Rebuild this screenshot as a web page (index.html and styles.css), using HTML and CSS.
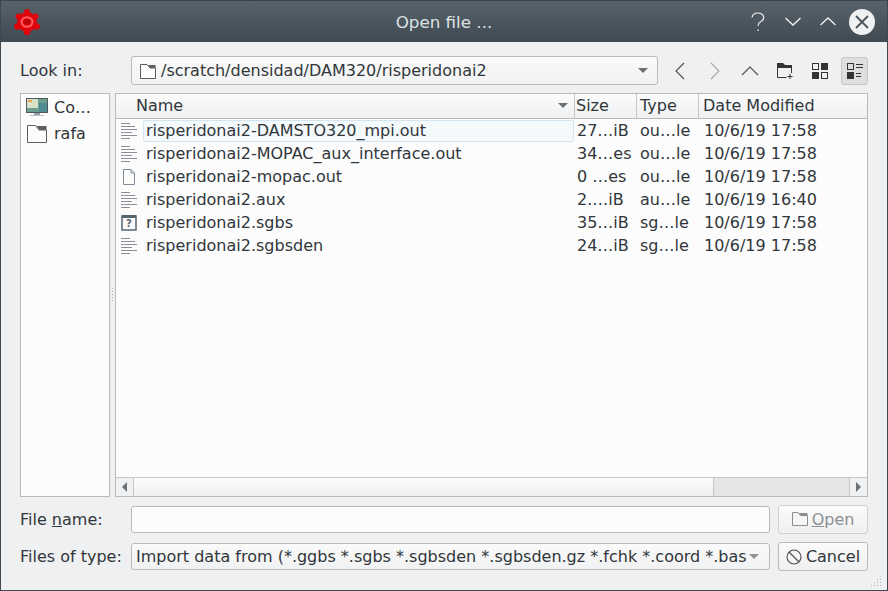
FILE: index.html
```html
<!DOCTYPE html>
<html lang="en">
<head>
<meta charset="utf-8">
<title>Open file ...</title>
<link rel="stylesheet" href="styles.css">
</head>
<body>
<div class="window">
  <header class="titlebar">
    <svg class="app-icon" width="28" height="28" viewBox="0 0 28 28">
      <g fill="#dd050b">
        <circle cx="14" cy="14" r="10"/>
        <circle cx="14" cy="4" r="3"/><circle cx="22.500" cy="8.500" r="3"/><circle cx="23.500" cy="18.500" r="3.300"/>
        <circle cx="14" cy="24" r="3.300"/><circle cx="4.500" cy="18.500" r="3.300"/><circle cx="5.500" cy="8.500" r="3"/>
      </g>
      <ellipse cx="14" cy="14" rx="5.500" ry="4.800" fill="none" stroke="#ff5a60" stroke-width="2"/>
      <ellipse cx="14" cy="14" rx="3" ry="2.400" fill="#bb040a"/>
    </svg>
    <div class="title">Open file ...</div>
    <div class="win-buttons">
      <svg class="win-help" width="14" height="20" viewBox="0 0 14 20"><path d="M1 5.500C1.500 2.500 4 1 7 1c3 0 5.800 1.700 5.800 4.500 0 2.200-1.500 3.300-3.200 4.200C7.800 10.700 7 11.500 7 14" fill="none" stroke="#eff0f1" stroke-width="1.200"/><rect x="6.400" y="17.400" width="1.300" height="1.600" fill="#eff0f1"/></svg>
      <svg class="win-chev win-down" width="16" height="9" viewBox="0 0 16 9"><path d="M.5 1l7.500 7 7.500-7" fill="none" stroke="#eff0f1" stroke-width="1.400"/></svg>
      <svg class="win-chev win-up" width="16" height="9" viewBox="0 0 16 9"><path d="M.5 8L8 1l7.500 7" fill="none" stroke="#eff0f1" stroke-width="1.400"/></svg>
      <div class="win-close"><svg width="26" height="26" viewBox="0 0 26 26"><path d="M7 7l12 12M19 7L7 19" stroke="#47525b" stroke-width="1.800"/></svg></div>
    </div>
  </header>

  <main class="content">
    <div class="row look-row">
      <label class="label">Look in:</label>
      <div class="combo look-combo">
        <svg class="combo-folder" width="16" height="16" viewBox="0 0 16 16"><path d="M.5 15.500V1.500H7L10 5h5.500v10.500z" fill="#fcfcfc" stroke="#5a5f63"/><path d="M8 2h7.500v3h-5z" fill="#5a5f63"/></svg>
        <span class="combo-text">/scratch/densidad/DAM320/risperidonai2</span>
        <span class="arrow"></span>
      </div>
      <div class="toolbar">
        <button class="tool"><svg width="12" height="18" viewBox="0 0 12 18"><path d="M10 1L2 9l8 8" fill="none" stroke="#4d4d4d" stroke-width="1.100"/></svg></button>
        <button class="tool"><svg width="12" height="18" viewBox="0 0 12 18"><path d="M2 1l8 8-8 8" fill="none" stroke="#a5a7a9" stroke-width="1.100"/></svg></button>
        <button class="tool"><svg width="18" height="12" viewBox="0 0 18 12"><path d="M1 10l8-8 8 8" fill="none" stroke="#4d4d4d" stroke-width="1.100"/></svg></button>
        <button class="tool"><svg width="18" height="18" viewBox="0 0 18 18"><path d="M1.500 15.500V4" fill="none" stroke="#333"/><path d="M1 1h6l2 2h7v3H1z" fill="#333"/><path d="M1.500 15.500h9M15.500 6v5" fill="none" stroke="#333"/><path d="M14 12v5M11.500 14.500h5" stroke="#333"/></svg></button>
        <button class="tool"><svg width="16" height="16" viewBox="0 0 16 16"><rect x=".5" y=".5" width="6" height="6" fill="none" stroke="#333"/><rect x="9" y="0" width="7" height="7" fill="#333"/><rect x="0" y="9" width="7" height="7" fill="#333"/><rect x="9.500" y="9.500" width="6" height="6" fill="none" stroke="#333"/></svg></button>
        <button class="tool tool-on"><svg width="16" height="16" viewBox="0 0 16 16"><rect x=".5" y=".5" width="6" height="6" fill="none" stroke="#333"/><path d="M9 1.500h7M9 4.500h7M9 10.500h5M9 13.500h5" stroke="#333"/><rect x="0" y="9" width="7" height="7" fill="#333"/></svg></button>
      </div>
    </div>

    <div class="panes">
      <aside class="sidebar">
        <div class="place">
          <svg width="22" height="20" viewBox="0 0 22 20"><rect x="0" y="0" width="22" height="15" fill="#4e5a60"/><rect x="1" y="1" width="20" height="13" fill="#6ba08f"/><rect x="1" y="1" width="11" height="9" fill="#d8e2c8"/><rect x="2" y="2" width="4" height="2" fill="#e9a14b"/><rect x="13" y="5" width="8" height="9" fill="#4f8c94"/><rect x="8" y="15" width="6" height="2" fill="#9aa2a6"/><rect x="4" y="17" width="14" height="1" fill="#b9bfc3"/></svg>
          <span>Co…</span>
        </div>
        <div class="place">
          <svg width="22" height="20" viewBox="0 0 22 20"><path d="M1.500 18.500V1.500H9.500L13 6h7.500v12.500z" fill="#fcfcfc" stroke="#5a5f63"/><path d="M10.500 2h10v4h-7z" fill="#5a5f63"/></svg>
          <span>rafa</span>
        </div>
      </aside>
      <div class="splitter"></div>
      <section class="tree">
        <div class="thead">
          <div class="th th-name">Name<span class="sort"></span></div>
          <div class="th th-size">Size</div>
          <div class="th th-type">Type</div>
          <div class="th th-date">Date Modified</div>
        </div>
        <div class="tbody">
          <div class="tr current">
            <div class="td td-name"><svg class="doc" width="16" height="16" viewBox="0 0 16 16"><path d="M0 .5h9M0 3.500h14M0 6.500h16M0 9.500h11M0 12.500h16M0 15.500h9" stroke="#8a9096"/></svg><span class="fname">risperidonai2-DAMSTO320_mpi.out</span></div>
            <div class="td td-size">27…iB</div><div class="td td-type">ou…le</div><div class="td td-date">10/6/19 17:58</div>
          </div>
          <div class="tr">
            <div class="td td-name"><svg class="doc" width="16" height="16" viewBox="0 0 16 16"><path d="M0 .5h9M0 3.500h14M0 6.500h16M0 9.500h11M0 12.500h16M0 15.500h9" stroke="#8a9096"/></svg><span class="fname">risperidonai2-MOPAC_aux_interface.out</span></div>
            <div class="td td-size">34…es</div><div class="td td-type">ou…le</div><div class="td td-date">10/6/19 17:58</div>
          </div>
          <div class="tr">
            <div class="td td-name"><svg class="doc" width="16" height="16" viewBox="0 0 16 16"><path d="M2.500.5H10l3.500 3.500v11.500h-11z M10 .5V4h3.500" fill="#fcfcfc" stroke="#7f8c98"/></svg><span class="fname">risperidonai2-mopac.out</span></div>
            <div class="td td-size">0 …es</div><div class="td td-type">ou…le</div><div class="td td-date">10/6/19 17:58</div>
          </div>
          <div class="tr">
            <div class="td td-name"><svg class="doc" width="16" height="16" viewBox="0 0 16 16"><path d="M0 .5h9M0 3.500h14M0 6.500h16M0 9.500h11M0 12.500h16M0 15.500h9" stroke="#8a9096"/></svg><span class="fname">risperidonai2.aux</span></div>
            <div class="td td-size">2.…iB</div><div class="td td-type">au…le</div><div class="td td-date">10/6/19 16:40</div>
          </div>
          <div class="tr">
            <div class="td td-name"><svg class="doc" width="16" height="16" viewBox="0 0 16 16"><rect x="1" y="1" width="14" height="14" fill="#fcfcfc" stroke="#56646f" stroke-width="1.500"/><rect x="1" y="0" width="14" height="3" fill="#56646f"/></svg><span class="qmark">?</span><span class="fname">risperidonai2.sgbs</span></div>
            <div class="td td-size">35…iB</div><div class="td td-type">sg…le</div><div class="td td-date">10/6/19 17:58</div>
          </div>
          <div class="tr">
            <div class="td td-name"><svg class="doc" width="16" height="16" viewBox="0 0 16 16"><path d="M0 .5h9M0 3.500h14M0 6.500h16M0 9.500h11M0 12.500h16M0 15.500h9" stroke="#8a9096"/></svg><span class="fname">risperidonai2.sgbsden</span></div>
            <div class="td td-size">24…iB</div><div class="td td-type">sg…le</div><div class="td td-date">10/6/19 17:58</div>
          </div>
        </div>
        <div class="hscroll">
          <div class="sb-btn"><span class="tri-left"></span></div>
          <div class="sb-thumb"></div>
          <div class="sb-track"></div>
          <div class="sb-btn sb-btn-r"><span class="tri-right"></span></div>
        </div>
      </section>
    </div>

    <div class="row name-row">
      <label class="label">File <u>n</u>ame:</label>
      <div class="input"></div>
      <button class="btn btn-off">
        <svg width="16" height="16" viewBox="0 0 16 16"><path d="M.5 14.500V1.500H6l2.500 3h7v10z" fill="#f5f5f5" stroke="#8b8d8f"/><path d="M6.500 2h9v2.500H9z" fill="#8b8d8f"/></svg>
        <span><u>O</u>pen</span>
      </button>
    </div>
    <div class="row type-row">
      <label class="label">Files of type:</label>
      <div class="combo type-combo">
        <span class="combo-clip">Import data from (*.ggbs *.sgbs *.sgbsden *.sgbsden.gz *.fchk *.coord *.bas</span>
        <span class="arrow"></span>
      </div>
      <button class="btn">
        <svg width="16" height="16" viewBox="0 0 16 16"><circle cx="8" cy="8" r="7" fill="none" stroke="#4d4d4d" stroke-width="1.100"/><path d="M3 3l10 10" stroke="#4d4d4d" stroke-width="1.100"/></svg>
        <span>Cancel</span>
      </button>
    </div>
  </main>
  <svg class="grip" width="12" height="12" viewBox="0 0 12 12"><path d="M9 1h1v1H9zM6 4h1v1H6zM9 4h1v1H9zM3 7h1v1H3zM6 7h1v1H6zM9 7h1v1H9zM0 10h1v1H0zM3 10h1v1H3zM6 10h1v1H6zM9 10h1v1H9z" fill="#b4b6b8"/></svg>
</div>
</body>
</html>
```

FILE: styles.css
```css
* { box-sizing: border-box; }
html, body { margin: 0; padding: 0; }
body {
  width: 888px;
  height: 591px;
  overflow: hidden;
  font-family: "DejaVu Sans", sans-serif;
  font-size: 16px;
  color: #31363b;
}
.window {
  position: relative;
  width: 888px;
  height: 591px;
  display: flex;
  flex-direction: column;
  background: #eff0f1;
  border: 1px solid #3c4852;
  border-top: 0;
}
.grip {
  position: absolute;
  right: 4px;
  bottom: 3px;
}
.titlebar {
  height: 42px;
  flex: none;
  display: flex;
  align-items: center;
  background: linear-gradient(#57626b, #3f4a53);
  border-top: 1px solid #3a444c;
  padding: 0 12px;
  color: #eff0f1;
}
.app-icon { flex: none; }
.title {
  flex: 1;
  text-align: center;
  font-size: 16.7px;
  padding-left: 96px;
  color: #dfe2e4;
}
.win-buttons { display: flex; align-items: center; }
.win-help { margin-right: 20px; }
.win-down { margin-right: 19px; }
.win-up { margin-right: 13px; }
.win-close {
  width: 26px;
  height: 26px;
  border-radius: 50%;
  background: #eff0f1;
}
.win-close svg { display: block; }
.content {
  flex: 1;
  display: flex;
  flex-direction: column;
  padding: 14px 19px 0;
}
.row { display: flex; align-items: center; }
.label { width: 111px; flex: none; }
.look-row { height: 29px; }
.combo {
  display: flex;
  align-items: center;
  height: 100%;
  flex: none;
  background: linear-gradient(#fafafa, #f1f2f3);
  border: 1px solid #b8babc;
  border-radius: 3px;
  overflow: hidden;
  white-space: nowrap;
}
.look-combo { width: 527px; padding: 0 9px 0 8px; }
.combo-folder { flex: none; margin-right: 5px; }
.combo-text { flex: 1; }
.arrow {
  flex: none;
  width: 0;
  height: 0;
  border-left: 5px solid transparent;
  border-right: 5px solid transparent;
  border-top: 5px solid #6c7074;
}
.toolbar { display: flex; align-items: center; margin-left: 4px; flex: none; }
.tool {
  width: 35px;
  height: 28px;
  flex: none;
  padding: 0;
  border: 1px solid transparent;
  background: none;
  display: flex;
  align-items: center;
  justify-content: center;
}
.tool-on {
  width: 27px;
  margin-left: 4px;
  background: #dcdee0;
  border-color: #c4c6c8;
  border-radius: 3px;
}
.panes {
  display: flex;
  height: 404px;
  margin-top: 8px;
}
.sidebar {
  width: 90px;
  flex: none;
  background: #fcfcfc;
  border: 1px solid #b8babc;
  padding: 1px 0 0 5px;
}
.place { display: flex; align-items: center; height: 25px; gap: 6px; margin-bottom: 1px; }
.place svg { flex: none; }
.splitter {
  width: 5px;
  flex: none;
  background: repeating-linear-gradient(#a9abad 0 1px, transparent 1px 3px) center / 1px 15px no-repeat;
}
.tree {
  flex: 1;
  display: flex;
  flex-direction: column;
  background: #fcfcfc;
  border: 1px solid #b8babc;
  min-width: 0;
}
.thead {
  display: flex;
  height: 25px;
  flex: none;
  background: linear-gradient(#fbfbfb, #eef0f1);
  border-bottom: 1px solid #b8babc;
}
.th {
  display: flex;
  align-items: center;
  padding-left: 3px;
  padding-bottom: 2px;
  border-right: 1px solid #c4c6c8;
}
.th-name { width: 459px; padding-left: 20px; justify-content: space-between; padding-right: 6px; }
.th-size { width: 62px; padding-left: 1px; }
.th-type { width: 62px; }
.th-date { flex: 1; border-right: 0; padding-left: 4px; }
.sort {
  width: 0;
  height: 0;
  border-left: 5px solid transparent;
  border-right: 5px solid transparent;
  border-top: 5px solid #6c7074;
}
.tbody { flex: 1; }
.tr { display: flex; height: 23px; align-items: center; }
.td { white-space: nowrap; padding-left: 3px; }
.td-name {
  width: 458px;
  display: flex;
  align-items: center;
  padding-left: 5px;
}
.doc { flex: none; }
.fname { margin-left: 6px; padding: 0 3px; line-height: 21px; }
.current .fname {
  flex: 1;
  height: 22px;
  background: #f4f9fc;
  border: 1px solid #d3e5f0;
  border-radius: 2px;
  padding-left: 2px;
  line-height: 20px;
}
.qmark {
  width: 16px;
  margin-left: -16px;
  text-align: center;
  font-size: 10px;
  font-weight: bold;
  color: #56646f;
  line-height: 16px;
  padding-top: 2px;
}
.td-size { width: 63px; }
.td-type { width: 64px; }
.td-date { flex: 1; }
.hscroll {
  flex: none;
  height: 19px;
  display: flex;
  border-top: 1px solid #c4c6c8;
  background: #e3e5e6;
}
.sb-btn {
  width: 18px;
  flex: none;
  background: #f0f1f2;
  border-right: 1px solid #c4c6c8;
  display: flex;
  align-items: center;
  justify-content: center;
}
.sb-btn-r { border-right: 0; border-left: 1px solid #c4c6c8; }
.tri-left {
  border-top: 5px solid transparent;
  border-bottom: 5px solid transparent;
  border-right: 5px solid #6c7074;
}
.tri-right {
  border-top: 5px solid transparent;
  border-bottom: 5px solid transparent;
  border-left: 5px solid #6c7074;
}
.sb-thumb {
  width: 580px;
  flex: none;
  background: linear-gradient(#fcfcfc, #eff0f1);
  border-right: 1px solid #c4c6c8;
}
.sb-track { flex: 1; }
.name-row { height: 28px; margin-top: 8px; }
.input {
  width: 639px;
  height: 27px;
  background: #fcfcfc;
  border: 1px solid #b8babc;
  border-radius: 3px;
}
.btn {
  width: 90px;
  height: 29px;
  margin-left: 8px;
  padding: 0;
  display: flex;
  align-items: center;
  justify-content: center;
  gap: 4px;
  font: inherit;
  color: inherit;
  background: linear-gradient(#fbfbfb, #eff0f1);
  border: 1px solid #b8babc;
  border-radius: 3px;
}
.btn-off { color: #8b8f93; border-color: #cfd1d3; }
.type-row { height: 29px; margin-top: 9px; }
.type-combo { width: 639px; height: 27px; padding: 0 10px 0 4px; }
.combo-clip { flex: 1; overflow: hidden; }
.type-combo .arrow { margin-left: 2px; border-top-color: #8f9296; }
```
